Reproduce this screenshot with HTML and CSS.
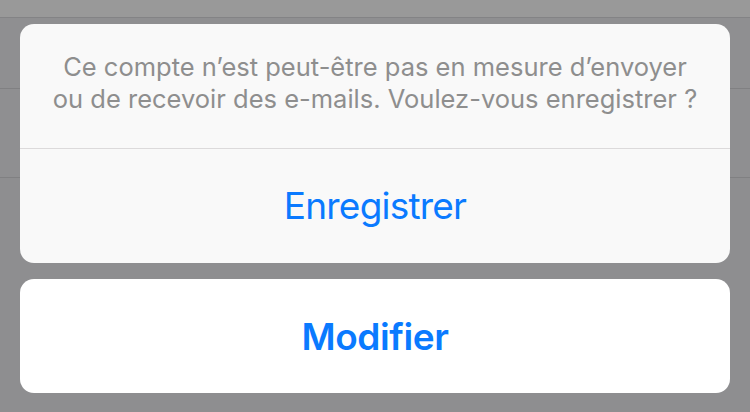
FILE: index.html
```html
<!DOCTYPE html>
<html lang="fr">
<head>
<meta charset="utf-8">
<title>Enregistrer le compte</title>
<link rel="stylesheet" href="styles.css">
</head>
<body>
  <div class="screen">
    <!-- dimmed settings list behind the action sheet -->
    <div class="backdrop">
      <div class="nav-strip"></div>
      <div class="row row-first"></div>
      <div class="row row-second"></div>
      <div class="rest"></div>
    </div>

    <div class="action-sheet">
      <div class="sheet-group">
        <div class="sheet-message">Ce compte n’est peut-être pas en mesure d’envoyer ou de recevoir des e-mails. Voulez-vous enregistrer ?</div>
        <button class="sheet-action">Enregistrer</button>
      </div>
      <div class="sheet-group sheet-cancel">
        <button class="sheet-action sheet-action-bold">Modifier</button>
      </div>
    </div>
  </div>
</body>
</html>
```

FILE: styles.css
```css
html, body {
  margin: 0;
  padding: 0;
}

body {
  width: 750px;
  height: 412px;
  overflow: hidden;
  background: #8e8e90;
  font-family: Inter, "Noto Sans", "Liberation Sans", sans-serif;
}

.screen {
  position: relative;
  width: 750px;
  height: 412px;
}

/* background list, dimmed */
.backdrop {
  display: flex;
  flex-direction: column;
  height: 100%;
}

.nav-strip {
  height: 17px;
  background: #999999;
  border-bottom: 1px solid #838385;
}

.row {
  background: #8f8f91;
  border-bottom: 1px solid #808082;
}

.row-first {
  height: 70px;
}

.row-second {
  height: 88px;
}

.rest {
  flex: 1;
  background: #8e8e90;
}

/* action sheet */
.action-sheet {
  position: absolute;
  left: 20px;
  right: 20px;
  top: 24px;
  display: flex;
  flex-direction: column;
  gap: 16px;
}

.sheet-group {
  background: #f9f9f9;
  border-radius: 14px;
  overflow: hidden;
  display: flex;
  flex-direction: column;
}

.sheet-cancel {
  background: #ffffff;
}

.sheet-message {
  box-sizing: border-box;
  height: 125px;
  padding: 27px 32px 0;
  border-bottom: 1px solid #dcdadb;
  color: #8e8e8e;
  font-size: 25.5px;
  line-height: 32px;
  text-align: center;
}

.sheet-action {
  height: 114px;
  border: 0;
  margin: 0;
  padding: 0 0 2px;
  background: transparent;
  color: #0a7aff;
  font-family: inherit;
  font-size: 37px;
  font-weight: 400;
  letter-spacing: -0.8px;
  display: flex;
  align-items: center;
  justify-content: center;
}

.sheet-action-bold {
  font-weight: 600;
  letter-spacing: -0.4px;
  padding: 0;
}
```
